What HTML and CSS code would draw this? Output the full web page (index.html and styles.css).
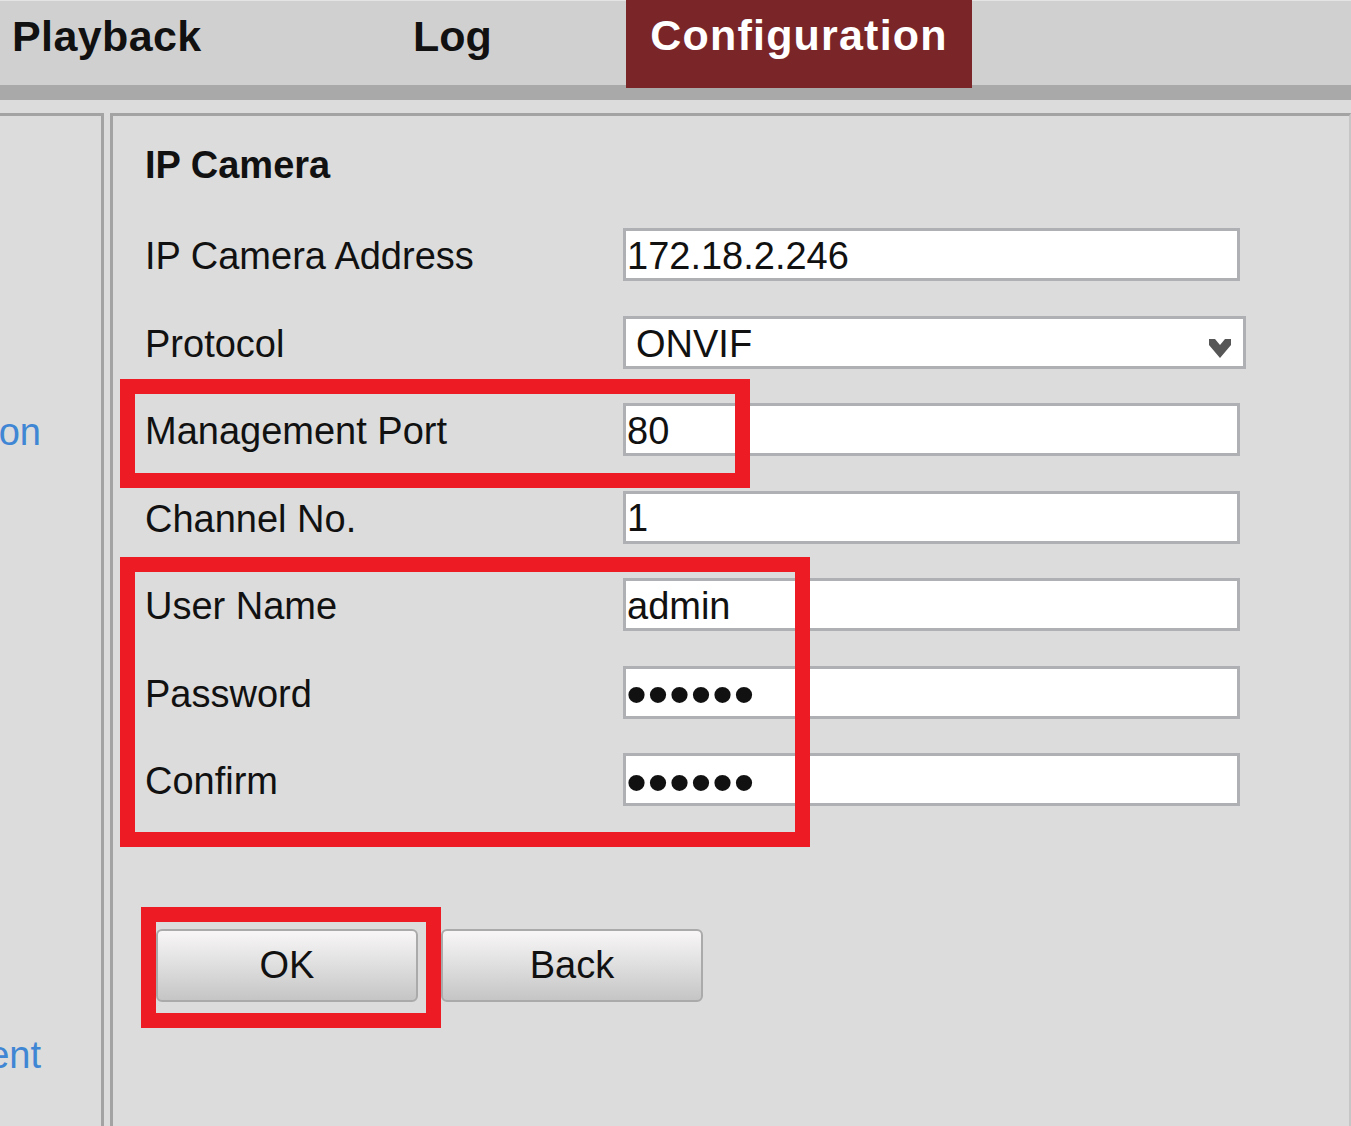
FILE: index.html
```html
<!DOCTYPE html>
<html lang="en">
<head>
  <meta charset="UTF-8">
  <title>IP Camera - Configuration</title>
  <link rel="stylesheet" href="styles.css">
</head>
<body>
  <nav class="tabs">
    <a class="tab tab-playback">Playback</a>
    <a class="tab tab-log">Log</a>
    <a class="tab tab-config active">Configuration</a>
  </nav>
  <div class="tab-rule"></div>

  <div class="main">
    <aside class="sidebar">
      <div class="side-item side-first"><span>Basic Configuration</span></div>
      <div class="side-item side-second"><span>Camera Management</span></div>
    </aside>

    <section class="panel">
      <h2 class="panel-title">IP Camera</h2>

      <div class="form-grid">
        <label for="ipAddr">IP Camera Address</label>
        <input type="text" id="ipAddr" value="172.18.2.246">

        <label for="protocol">Protocol</label>
        <div class="select-wrap">
          <select id="protocol">
            <option>ONVIF</option>
            <option>HIKVISION</option>
          </select>
          <svg class="chevron" width="22" height="21" viewBox="0 0 22 21">
            <path d="M0 1 L6 1 L11 7 L16 1 L22 1 L22 7 L11 20 L0 7 Z" fill="#565656"/>
          </svg>
        </div>

        <label for="mgmtPort">Management Port</label>
        <input type="text" id="mgmtPort" value="80">

        <label for="channel">Channel No.</label>
        <input type="text" id="channel" value="1">

        <label for="userName">User Name</label>
        <input type="text" id="userName" value="admin">

        <label for="password">Password</label>
        <input type="password" id="password" class="pw" value="123456">

        <label for="confirm">Confirm</label>
        <input type="password" id="confirm" class="pw" value="123456">
      </div>

      <div class="buttons">
        <button class="btn">OK</button>
        <button class="btn">Back</button>
      </div>
    </section>
  </div>

  <!-- red highlight marks drawn over the form -->
  <div class="mark mark-port"></div>
  <div class="mark mark-login"></div>
  <div class="mark mark-ok"></div>
</body>
</html>
```

FILE: styles.css
```css
body {
  margin: 0;
  background: #dcdcdc;
  font-family: "Liberation Sans", Arial, sans-serif;
  color: #111;
  width: 1351px;
  height: 1126px;
  overflow: hidden;
}

/* top tabs */
.tabs {
  display: flex;
  align-items: flex-start;
  height: 85px;
  background: #d1d0d0;
  border-top: 1px solid #e4e4e4;
  box-sizing: border-box;
}
.tab {
  display: block;
  height: 84px;
  box-sizing: border-box;
  padding-top: 11px;
  font-size: 43px;
  font-weight: bold;
  line-height: 48px;
  color: #111;
}
.tab-playback {
  width: 413px;
  padding-left: 12px;
  letter-spacing: 0.4px;
}
.tab-log {
  width: 213px;
}
.tab-config {
  width: 346px;
  height: 88px;
  margin-top: -1px;
  text-align: center;
  letter-spacing: 1.2px;
  background: #7a2528;
  color: #fff;
  position: relative;
}
.tab-rule {
  height: 15px;
  background: #a9a9a9;
}

/* body area */
.main {
  display: flex;
  gap: 6px;
  margin-top: 13px;
}
.sidebar {
  width: 101px;
  height: 1010px;
  border-top: 3px solid #a3a3a3;
  border-right: 3px solid #a3a3a3;
  overflow: hidden;
}
.side-item {
  display: flex;
  justify-content: flex-end;
  padding-right: 60px;
  height: 53px;
  line-height: 53px;
  font-size: 38px;
  white-space: nowrap;
  color: #3f86d4;
}
.side-first {
  margin-top: 290px;
}
.side-second {
  margin-top: 570px;
}

.panel {
  flex: 1;
  height: 1010px;
  border-top: 3px solid #a3a3a3;
  border-left: 3px solid #a3a3a3;
  border-right: 2px solid #c6c6c6;
  padding: 21px 0 0 32px;
}
.panel-title {
  margin: 0 0 38px;
  padding-top: 2px;
  height: 51px;
  font-size: 38px;
  line-height: 53px;
  font-weight: bold;
}

.form-grid {
  display: grid;
  grid-template-columns: 478px 617px;
  grid-auto-rows: 53px;
  row-gap: 34.5px;
}
.form-grid label {
  font-size: 38px;
  line-height: 53px;
  padding-top: 2px;
}
.form-grid input {
  height: 53px;
  width: 617px;
  box-sizing: border-box;
  border: 3px solid #afb0b4;
  background: #fff;
  padding: 3px 0 0 1px;
  margin: 0;
  font-family: inherit;
  font-size: 38px;
  color: #111;
  outline: none;
}
.form-grid input.pw {
  font-size: 60px;
  letter-spacing: 0.5px;
  padding: 5px 0 0 0;
}

.select-wrap {
  position: relative;
  width: 623px;
  height: 53px;
}
.select-wrap select {
  appearance: none;
  -webkit-appearance: none;
  width: 623px;
  height: 53px;
  box-sizing: border-box;
  border: 3px solid #afb0b4;
  border-radius: 0;
  background: #fff;
  padding: 3px 0 0 10px;
  margin: 0;
  font-family: inherit;
  font-size: 38px;
  color: #111;
  outline: none;
}
.chevron {
  position: absolute;
  right: 15px;
  top: 22px;
}

.buttons {
  display: flex;
  gap: 23px;
  margin: 123px 0 0 11px;
}
.btn {
  width: 262px;
  height: 73px;
  border: 2px solid #aaa;
  border-radius: 6px;
  background: linear-gradient(#f8f6f7, #e2e1e2 45%, #c6c5c6);
  font-family: inherit;
  font-size: 38px;
  color: #111;
  padding: 0;
}

/* annotation boxes */
.mark {
  position: absolute;
  border: 15px solid #ed1c24;
  box-sizing: border-box;
}
.mark-port {
  left: 120px;
  top: 379px;
  width: 630px;
  height: 109px;
}
.mark-login {
  left: 120px;
  top: 557px;
  width: 690px;
  height: 290px;
}
.mark-ok {
  left: 141px;
  top: 907px;
  width: 300px;
  height: 121px;
}
```
